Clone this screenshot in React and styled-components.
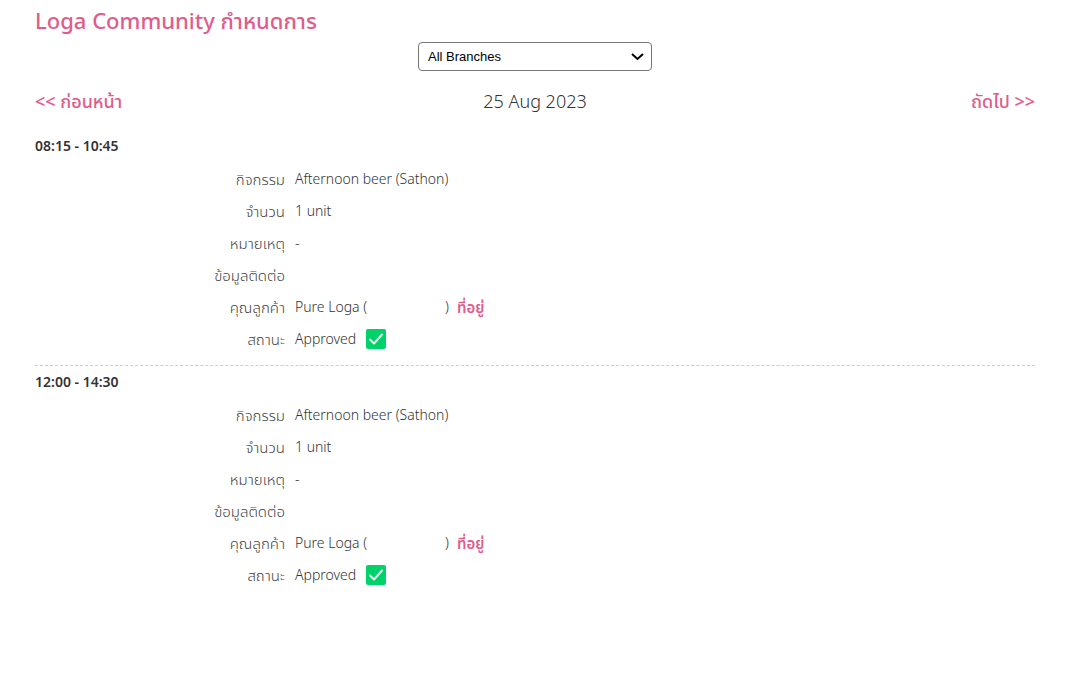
import React, { useState } from "react";
import styled, { createGlobalStyle } from "styled-components";

const GlobalStyle = createGlobalStyle`
  * {
    box-sizing: border-box;
  }
  body {
    margin: 0;
    background: #fff;
    color: #333;
    font-family: "Noto Sans", "Noto Sans Thai", sans-serif;
    font-size: 14px;
    font-weight: 300;
  }
`;

const Page = styled.main`
  padding: 3px 30px 40px 35px;
`;

const Title = styled.h1`
  margin: 0;
  color: #e05c8c;
  font-size: 22px;
  font-weight: 500;
  line-height: 34px;
`;

const Filter = styled.div`
  display: flex;
  justify-content: center;
  margin-top: 5px;
`;

const SelectBox = styled.div`
  position: relative;
  width: 234px;
`;

const BranchSelect = styled.select`
  appearance: none;
  display: block;
  width: 100%;
  height: 29px;
  padding: 0 28px 0 9px;
  border: 1px solid #767676;
  border-radius: 4px;
  background: #fff;
  color: #000;
  font-family: "Liberation Sans", Arial, sans-serif;
  font-size: 13px;
`;

const Arrow = styled.svg`
  position: absolute;
  top: 10px;
  right: 8px;
  width: 13px;
  height: 9px;
  pointer-events: none;
`;

const DateBar = styled.nav`
  display: grid;
  grid-template-columns: 1fr auto 1fr;
  align-items: center;
  margin-top: 14px;
  font-size: 18px;
  line-height: 32px;
`;

const DayLink = styled.a`
  justify-self: ${(props) => (props.$end ? "end" : "start")};
  color: #e05c8c;
  font-weight: 500;
  text-decoration: none;
`;

const SlotList = styled.div`
  margin-top: 13px;
`;

const Slot = styled.section`
  padding: 4px 0 10px;

  & + & {
    border-top: 1px dashed #ccc;
  }
`;

const SlotTime = styled.h2`
  margin: 0;
  font-size: 14px;
  font-weight: 600;
  line-height: 24px;
`;

const Details = styled.dl`
  margin: 5px 0 0;
`;

const Row = styled.div`
  display: grid;
  grid-template-columns: 25% 1fr;
  column-gap: 10px;
  line-height: 32px;
`;

const Label = styled.dt`
  color: #444;
  font-size: 15px;
  text-align: right;
`;

const Value = styled.dd`
  display: flex;
  align-items: center;
  margin: 0;
`;

const Phone = styled.span`
  width: 78px;
`;

const AddressLink = styled.a`
  margin-left: 8px;
  color: #e05c8c;
  font-size: 15px;
  font-weight: 600;
  text-decoration: none;
`;

const Tick = styled.svg`
  width: 20px;
  height: 20px;
  margin-left: 10px;
`;

const bookings = [
  {
    time: "08:15 - 10:45",
    activity: "Afternoon beer (Sathon)",
    amount: "1 unit",
    note: "-",
    contact: "",
    customer: "Pure Loga",
    status: "Approved",
  },
  {
    time: "12:00 - 14:30",
    activity: "Afternoon beer (Sathon)",
    amount: "1 unit",
    note: "-",
    contact: "",
    customer: "Pure Loga",
    status: "Approved",
  },
];

function ApprovedIcon() {
  return (
    <Tick viewBox="0 0 20 20" aria-hidden="true">
      <rect width="20" height="20" rx="2" fill="#00d26a" />
      <path d="M4 10.5 L8 14.5 L16 5.5" fill="none" stroke="#f4f4f4" strokeWidth="2" strokeLinecap="round" strokeLinejoin="round" />
    </Tick>
  );
}

function Booking({ item }) {
  return (
    <Slot>
      <SlotTime>{item.time}</SlotTime>
      <Details>
        <Row>
          <Label>กิจกรรม</Label>
          <Value>{item.activity}</Value>
        </Row>
        <Row>
          <Label>จำนวน</Label>
          <Value>{item.amount}</Value>
        </Row>
        <Row>
          <Label>หมายเหตุ</Label>
          <Value>{item.note}</Value>
        </Row>
        <Row>
          <Label>ข้อมูลติดต่อ</Label>
          <Value>{item.contact}</Value>
        </Row>
        <Row>
          <Label>คุณลูกค้า</Label>
          <Value>
            {item.customer} (<Phone />)
            <AddressLink href="#address">ที่อยู่</AddressLink>
          </Value>
        </Row>
        <Row>
          <Label>สถานะ</Label>
          <Value>
            {item.status}
            <ApprovedIcon />
          </Value>
        </Row>
      </Details>
    </Slot>
  );
}

export default function App() {
  const [branch, setBranch] = useState("all");

  return (
    <Page>
      <GlobalStyle />
      <Title>Loga Community กำหนดการ</Title>
      <Filter>
        <SelectBox>
          <BranchSelect aria-label="Branch" value={branch} onChange={(e) => setBranch(e.target.value)}>
            <option value="all">All Branches</option>
          </BranchSelect>
          <Arrow viewBox="0 0 13 9" aria-hidden="true">
            <path d="M1 2 L6.5 7 L12 2" fill="none" stroke="#000" strokeWidth="2" />
          </Arrow>
        </SelectBox>
      </Filter>
      <DateBar>
        <DayLink href="#previous">&lt;&lt; ก่อนหน้า</DayLink>
        <span>25 Aug 2023</span>
        <DayLink href="#next" $end>ถัดไป &gt;&gt;</DayLink>
      </DateBar>
      <SlotList>
        {bookings.map((item) => (
          <Booking key={item.time} item={item} />
        ))}
      </SlotList>
    </Page>
  );
}
